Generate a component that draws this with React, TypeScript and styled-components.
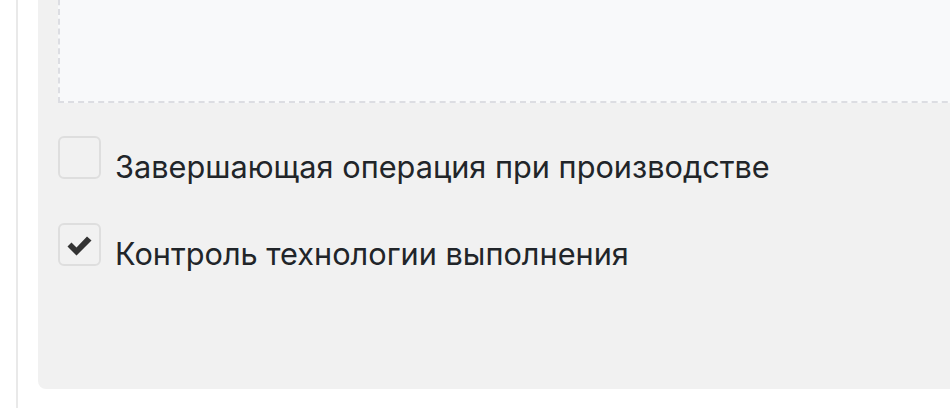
import React from "react";
import styled, { createGlobalStyle } from "styled-components";

const Global = createGlobalStyle`
  html, body { margin: 0; padding: 0; background: #ffffff; }
  body { overflow: hidden; font-family: "Inter", "Liberation Sans", sans-serif; }
  #root { width: 950px; height: 408px; overflow: hidden; }
`;

const Page = styled.div`
  width: 950px;
  height: 408px;
  overflow: hidden;
  padding-left: 16px;
  box-sizing: border-box;
  display: flex;
`;

const Column = styled.div`
  border-left: 2px solid #e9e9e9;
  padding-left: 20px;
  display: flex;
  flex-direction: column;
  flex: 1;
`;

const Panel = styled.div`
  width: 960px;
  margin-top: -30px;
  padding: 0 0 0 20px;
  box-sizing: border-box;
  background: #f1f1f1;
  border-radius: 0 0 0 8px;
  height: 419px;
  flex-shrink: 0;
  display: flex;
  flex-direction: column;
`;

const DropZone = styled.div`
  height: 133px;
  box-sizing: border-box;
  background: #f8f9fa;
  border: 2px dashed #dcdde2;
  border-right: none;
`;

const Options = styled.div`
  display: flex;
  flex-direction: column;
  gap: 35px;
  padding-top: 33px;
`;

const Option = styled.label`
  display: flex;
  align-items: flex-start;
  gap: 14px;
  font-size: 30.7px;
  color: #212529;
  line-height: 43px;
`;

const Text = styled.span`
  padding-top: 9px;
  white-space: nowrap;
`;

const Box = styled.span`
  width: 43px;
  height: 43px;
  box-sizing: border-box;
  border: 2px solid #dedede;
  border-radius: 6px;
  background: #f1f1f1;
  display: flex;
  align-items: center;
  justify-content: center;
  flex-shrink: 0;
`;

const Check = () => (
  <svg width="25" height="23" viewBox="0 0 25 23">
    <path d="M0.5 13.5 L4.5 9.5 L9.5 14.5 L20 3.5 L24.5 7.5 L9.5 22.5 Z" fill="#333333" />
  </svg>
);

export default function App() {
  return (
    <>
      <Global />
      <Page>
        <Column>
          <Panel>
            <DropZone />
            <Options>
              <Option>
                <Box />
                <Text>Завершающая операция при производстве</Text>
              </Option>
              <Option>
                <Box>
                  <Check />
                </Box>
                <Text>Контроль технологии выполнения</Text>
              </Option>
            </Options>
          </Panel>
        </Column>
      </Page>
    </>
  );
}
